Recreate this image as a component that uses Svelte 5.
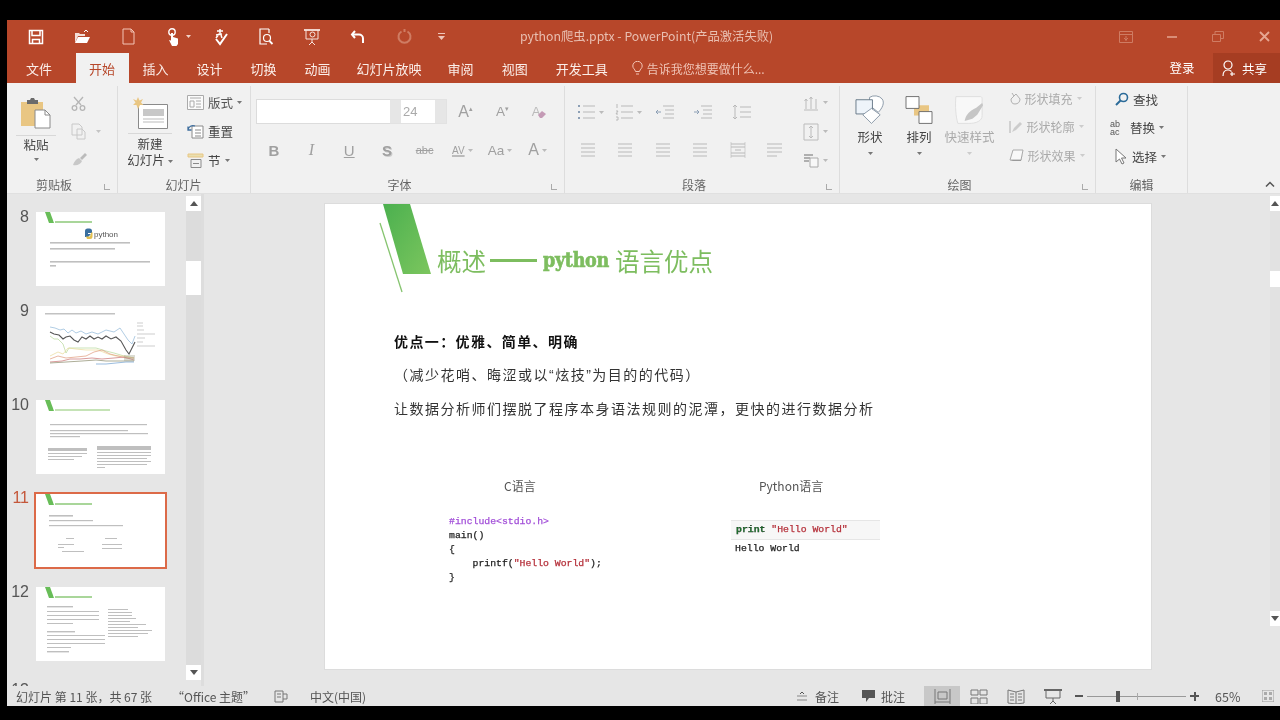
<script>
  const tabs = ['开始','插入','设计','切换','动画','幻灯片放映','审阅','视图','开发工具'];
  const lines8 = [[14,30,80,1.6],[14,36,65,1.6],[14,49,100,1.6],[14,53,6,1.6]];
  const lines10 = [[14,24,97,1.2],[14,30,78,1.2],[14,33,98,1.2],[14,36,30,1.2],[12,48,39,3],[12,53,39,1],[12,56,34,1],[12,59,26,1],[61,46,54,4],[61,52,54,1],[61,55,54,1],[61,58,50,1],[61,61,54,1],[61,64,50,1],[61,67,8,1]];
  const lines11 = [[13,21,24,1.6],[13,26,44,1.2],[13,31,74,1.2],[30,44,8,1],[69,44,12,1],[22,50,16,1],[22,53,6,1],[26,57,22,1],[66,50,20,1],[66,54,20,1]];
  const lines12 = [[11,19,26,1.4],[11,24,52,1],[11,28,52,1],[11,32,52,1],[11,36,26,1],[11,44,28,1.4],[11,48,58,1],[11,52,58,1],[11,56,58,1],[11,60,24,1],[11,64,22,1.4],[72,22,20,1],[72,25,24,1],[72,28,24,1],[72,31,28,1],[72,34,22,1],[72,37,38,1],[72,40,30,1],[72,43,44,1],[72,46,40,1],[72,49,30,1]];
</script>

{#snippet caret(color = '#777')}
  <svg class="caret" width="5" height="3" viewBox="0 0 5 3"><path d="M0 0h5L2.500 3z" fill={color}/></svg>
{/snippet}

{#snippet banner(w = 37, color = '#a9d69a')}
  <path d="M9 0h5l4 11h-5z" fill="#68bd58"/>
  <rect x="19" y="9" width={w} height="2" fill={color}/>
{/snippet}

{#snippet bars(list)}
  <g class="soft">
    {#each list as l}
      <rect x={l[0]} y={l[1]} width={l[2]} height={l[3]} fill="#666" opacity=".42"/>
    {/each}
  </g>
{/snippet}

{#snippet lines(kind)}
  <svg width="22" height="20" viewBox="0 0 22 20" fill="none" stroke="#b9b9b9" stroke-width="1">
    {#if kind === 'bul'}
      <path d="M7 4h12M7 10h12M7 16h12"/><path d="M2 4h2M2 10h2M2 16h2" stroke="#8c9fb5" stroke-width="2"/>
    {:else if kind === 'num'}
      <path d="M7 4h12M7 10h12M7 16h12M3 2v4M2 9h2l-2 3h2M2 15h2v3H2" />
    {:else if kind === 'dec'}
      <path d="M9 4h11M11 8h9M11 12h9M9 16h11"/><path d="M7 10H2m2-2-2 2 2 2" stroke="#8c9fb5"/>
    {:else if kind === 'inc'}
      <path d="M9 4h11M11 8h9M11 12h9M9 16h11"/><path d="M2 10h5m-2-2 2 2-2 2" stroke="#8c9fb5"/>
    {:else if kind === 'sp'}
      <path d="M9 5h11M9 10h11M9 15h11M4 3v14M2 5l2-2 2 2M2 15l2 2 2-2"/>
    {:else if kind === 'al'}
      <path d="M4 4h14M4 8h14M4 12h14M4 16h14"/>
    {:else if kind === 'di'}
      <path d="M4 4h14M4 7h14M4 13h14M4 16h14M8 10h6"/><path d="M4 2v16M18 2v16" stroke-width=".6"/>
    {:else}
      <path d="M3 4h15M3 8h15M3 12h15M3 16h10"/>
    {/if}
  </svg>
{/snippet}

<div class="stage">
  <div class="window">
    <header class="titlebar">
      <div class="qat">
        <span class="q"><svg width="16" height="16" viewBox="0 0 16 16" fill="none" stroke="#fff" stroke-width="1.500"><path d="M1.500 1.500h13v13h-13z"/><path d="M4 1.500v5h8v-5M4.500 14.500v-4h7v4"/></svg></span>
        <span class="q"><svg width="17" height="15" viewBox="0 0 17 15"><path d="M1 14V4h4l1 1h5v2H4z" fill="#f3ded7"/><path d="M1 14l3-6h12l-3 6z" fill="#fff"/><path d="M10 3l2-2 2 2" stroke="#fff" fill="none"/></svg></span>
        <span class="q"><svg width="13" height="17" viewBox="0 0 13 17" fill="none" stroke="#f3c5b6"><path d="M1 1h8l3 3v12H1zM9 1v3h3"/></svg></span>
        <span class="q touch"><svg width="13" height="18" viewBox="0 0 13 18"><circle cx="5" cy="4" r="3.200" fill="none" stroke="#fff" stroke-width="1.400"/><path d="M4 5h2v4l5 1.500V16l-1.500 2H5L2 12l2 .5z" fill="#fff"/></svg>{@render caret('#f1d4ca')}</span>
        <span class="q"><svg width="17" height="18" viewBox="0 0 17 18" fill="none" stroke="#fff" stroke-width="1.500"><path d="M5 3h6M8 1v5M4 7l6-1M7 6l-3 4M9 7l1 3"/><path d="M4 11l4 5 7-10" stroke-width="2"/></svg></span>
        <span class="q"><svg width="16" height="18" viewBox="0 0 16 18" fill="none" stroke="#fff" stroke-width="1.200"><path d="M11 1H2v15h7M11 1v4"/><circle cx="9" cy="10" r="3.500"/><path d="M11.500 13l3 3" stroke-width="1.800"/></svg></span>
        <span class="q"><svg width="18" height="18" viewBox="0 0 18 18" fill="none" stroke="#f8e4dd"><path d="M1 2h16" stroke-width="1.800"/><path d="M3 2v9h12V2M9 11v3M6 17l3-3 3 3"/><circle cx="9.500" cy="6.500" r="2.500"/></svg></span>
        <span class="q"><svg width="16" height="16" viewBox="0 0 16 16" fill="none" stroke="#fff" stroke-width="2"><path d="M5 2L2 5.500 5 9"/><path d="M2.500 5.500H9a4 4 0 0 1 4 4V14" /></svg></span>
        <span class="q"><svg width="15" height="15" viewBox="0 0 15 15" fill="none" stroke="#cf7c63" stroke-width="2"><path d="M10.500 2.500a6 6 0 1 1-6 0M7.500 0v3"/></svg></span>
        <span class="q more"><svg width="7" height="7" viewBox="0 0 7 7" fill="#efc6b9"><path d="M0 0h7v1H0zM0 3h7L3.500 7z"/></svg></span>
      </div>
      <div class="doc-title">python爬虫.pptx - PowerPoint(产品激活失败)</div>
      <div class="winbtns">
        <span><svg width="14" height="12" viewBox="0 0 14 12" fill="none" stroke="#cf7c63"><path d="M.5.500h13v11H.500zM.5 3.500h13M7 5v5M5 7l2 2 2-2"/></svg></span>
        <span><svg width="10" height="2" viewBox="0 0 10 2"><path d="M0 0h10v2H0z" fill="#d98d76"/></svg></span>
        <span><svg width="12" height="11" viewBox="0 0 12 11" fill="none" stroke="#cf7c63"><path d="M.5 3.500h8v7h-8zM3 3V.500h8.500v7H9"/></svg></span>
        <span><svg width="11" height="11" viewBox="0 0 11 11" stroke="#e6a692" stroke-width="1.800"><path d="M1 1l9 9M10 1l-9 9"/></svg></span>
      </div>
    </header>

    <nav class="tabbar">
      <span class="tab file">文件</span>
      {#each tabs as t, i}
        <span class="tab" class:active={i === 0} class:long={t.length === 5}>{t}</span>
      {/each}
      <span class="tell"><svg width="11" height="15" viewBox="0 0 11 15" fill="none" stroke="#f3c5b6"><path d="M3.500 10.500C3 8 .8 7.500.8 5a4.700 4.700 0 0 1 9.400 0c0 2.500-2.200 3-2.700 5.500zM4 13h3"/></svg>告诉我您想要做什么...</span>
      <span class="login">登录</span>
      <span class="share"><svg width="14" height="17" viewBox="0 0 14 17" fill="none" stroke="#fff" stroke-width="1.200"><circle cx="6" cy="5" r="4"/><path d="M1 16c0-4 2-6 5-6 1.500 0 2.500.5 3.500 1.500M10 12v4M8 14h5"/></svg>共享</span>
    </nav>

    <section class="ribbon">
      <div class="group g-clip">
        <div class="g-body clip">
          <div class="paste">
            <svg width="30" height="32" viewBox="0 0 30 32"><path d="M0 5h22v24H0z" fill="#e9c683"/><path d="M6 3h3l1-2h3l1 2h3v4H6z" fill="#6b6b6b"/><path d="M14 13h10l5 5v13H14z" fill="#fff" stroke="#8a8a8a"/><path d="M24 13v5h5" fill="none" stroke="#8a8a8a"/></svg>
            <i class="hr"></i>
            <span class="txt">粘贴</span>
            {@render caret()}
          </div>
          <div class="clip-tools">
            <svg width="15" height="15" viewBox="0 0 15 15" fill="none" stroke="#b5b5b5" stroke-width="1.300"><path d="M3 1l7 8M12 1L5 9"/><circle cx="3.500" cy="12" r="2.300"/><circle cx="11.500" cy="12" r="2.300"/></svg>
            <span class="with-caret"><svg width="15" height="17" viewBox="0 0 15 17" fill="none" stroke="#c8c8c8"><path d="M1 1h7l3 3v8H1zM6 6h5l3 3v7H6z"/></svg>{@render caret('#c4c4c4')}</span>
            <svg width="17" height="15" viewBox="0 0 17 15"><path d="M9 6l5-5 2 2-5 5z" fill="#bbb"/><path d="M2 13c1-3 3-6 6-7l3 3c-1 3-5 5-9 4z" fill="#c8c8c8"/></svg>
          </div>
        </div>
        <div class="g-label lab-clip">剪贴板<em class="launch"></em></div>
      </div>

      <div class="group g-slide">
        <div class="g-body slidebody">
          <div class="newslide">
            <svg width="36" height="34" viewBox="0 0 36 34"><path d="M6.500 8.500h29v24h-29z" fill="#fff" stroke="#8a8a8a"/><path d="M11 13h21v7H11z" fill="#c8c8c8"/><path d="M11 23h21M11 26h21" stroke="#bbb"/><path d="M6 1l1.500 3.500L11 3 9 6.500 11.500 9 8 9 6 13 4.500 9 1 9l2.500-2.500L1 3l3.500 1.500z" fill="#e9c683"/></svg>
            <i class="hr wide"></i>
            <span class="txt">新建</span>
            <span class="txt">幻灯片 {@render caret()}</span>
          </div>
          <div class="slide-tools">
            <span class="st dim"><svg width="17" height="15" viewBox="0 0 17 15" fill="none" stroke="#aaa"><path d="M.5.500h16v14H.500z" fill="#fbfbfb"/><path d="M3 3h11M3 6h4v6H3zM9 6h5M9 9h5M9 12h5"/></svg><b>版式</b>{@render caret()}</span>
            <span class="st"><svg width="17" height="15" viewBox="0 0 17 15" fill="none" stroke="#8a8a8a"><path d="M5 2h11v12H5z" fill="#fff"/><path d="M8 6h6M8 9h6M8 12h6"/><path d="M1 6a5 5 0 0 1 7-4M1 2.500V6h3.500" stroke="#3f6f9f" stroke-width="1.300"/></svg><b>重置</b></span>
            <span class="st"><svg width="17" height="15" viewBox="0 0 17 15" fill="none" stroke="#8a8a8a"><path d="M1 1h15v3H1z" fill="#e9dfb0" stroke="#e9c683"/><path d="M4 6.500h10v8H4zM6 10.500h6"/></svg><b>节</b>{@render caret()}</span>
          </div>
        </div>
        <div class="g-label lab-slide">幻灯片</div>
      </div>

      <div class="group g-font">
        <div class="g-body fontbody">
          <div class="fontrow">
            <div class="fontname"></div>
            <div class="fontsize"><i></i><span>24</span><i></i></div>
            <span class="big">A<sup>▴</sup></span>
            <span class="big small">A<sup>▾</sup></span>
            <span class="clear">A<svg width="10" height="9" viewBox="0 0 10 9"><path d="M1 5l4-4 4 3-4 4H3z" fill="#c49ab5"/></svg></span>
          </div>
          <div class="fmtrow">
            <b>B</b><i class="it">I</i><u>U</u><b class="sh">S</b><s>abc</s>
            <span class="sp"><u>AV</u>{@render caret('#bbb')}</span>
            <span class="sp">Aa{@render caret('#bbb')}</span>
            <span class="sp fa">A{@render caret('#bbb')}</span>
          </div>
        </div>
        <div class="g-label lab-font">字体<em class="launch"></em></div>
      </div>

      <div class="group g-para">
        <div class="g-body parabody">
          <div class="para-grid">
            <span class="cc">{@render lines('bul')}{@render caret('#bbb')}</span><span class="cc">{@render lines('num')}{@render caret('#bbb')}</span><span class="n4">{@render lines('dec')}</span><span class="n5">{@render lines('inc')}</span><span class="n8">{@render lines('sp')}</span><span></span>
            <span>{@render lines('al')}</span><span>{@render lines('al')}</span><span>{@render lines('al')}</span><span>{@render lines('al')}</span><span>{@render lines('di')}</span><span>{@render lines('oth')}</span>
          </div>
          <div class="para-side">
            <span><svg width="16" height="16" viewBox="0 0 16 16" fill="none" stroke="#bbb"><path d="M3 14V4M8 14V2M13 14V4M1 15h14M3 4L1.500 6M3 4l1.500 2M8 2L6.500 4M8 2l1.500 2"/></svg>{@render caret('#bbb')}</span>
            <span><svg width="16" height="18" viewBox="0 0 16 18" fill="none" stroke="#bbb"><path d="M1 1h14v16H1zM8 3v12M6 5l2-2 2 2M6 13l2 2 2-2"/></svg>{@render caret('#bbb')}</span>
            <span><svg width="16" height="15" viewBox="0 0 16 15" fill="none" stroke="#aaa"><path d="M1 2h9M1 5h6M1 8h5" stroke="#999" stroke-width="1.400"/><path d="M7 5h8v9H7z" fill="#f8f8f8"/></svg>{@render caret('#bbb')}</span>
          </div>
        </div>
        <div class="g-label lab-para">段落<em class="launch"></em></div>
      </div>

      <div class="group g-draw">
        <div class="g-body drawbody">
          <div class="bigbtn">
            <svg width="31" height="30" viewBox="0 0 32 38" preserveAspectRatio="none"><path d="M15 3a9 9 0 0 1 13 2c3 5 0 12-4 17l-9-9z" fill="#fff" stroke="#7f8f9f"/><path d="M1 6h17v18H1z" fill="#eef4fa" stroke="#5d6f7f"/><path d="M17 17l9 8-9 11-9-11z" fill="#fff" stroke="#7f8f9f"/></svg>
            <span class="txt">形状</span>{@render caret()}
          </div>
          <div class="bigbtn">
            <svg width="28" height="30" viewBox="0 0 28 38" preserveAspectRatio="none"><path d="M9 13h15v13H9z" fill="#e9c683"/><path d="M1 2h13v15H1z" fill="#fff" stroke="#666"/><path d="M14 21h13v15H14z" fill="#fff" stroke="#666"/></svg>
            <span class="txt">排列</span>{@render caret()}
          </div>
          <div class="bigbtn off">
            <svg width="33" height="30" viewBox="0 0 34 38" preserveAspectRatio="none"><path d="M3 2h25c2 0 2 2 2 4v20c0 7-6 10-14 10H5c-2-8-3-22-2-34z" fill="#f8f8f8" stroke="#ddd"/><path d="M24 16l6-6 1 3-6 12-5 5-8 3c1-8 5-13 12-17z" fill="#c6c6c6"/></svg>
            <span class="txt">快速样式</span>{@render caret('#ccc')}
          </div>
          <div class="shape-tools">
            <span><svg width="12" height="13" viewBox="0 0 12 13" fill="none" stroke="#b0b0b0"><path d="M2 7l5-5 4 5c0 3-2 5-5 5S2 10 2 7zM5 4L3 1"/></svg><b>形状填充</b>{@render caret('#ccc')}</span>
            <span><svg width="14" height="14" viewBox="0 0 14 14" fill="none" stroke="#b0b0b0"><path d="M1 1v12"/><path d="M3 12l2-4 6-6 2 2-6 6z" fill="#ccc" stroke="none"/></svg><b>形状轮廓</b>{@render caret('#ccc')}</span>
            <span><svg width="15" height="13" viewBox="0 0 15 13"><path d="M4 1h10l-2 10H1z" fill="#f8f8f8" stroke="#aaa"/><path d="M1 11l3 1h8l2-8-2 7z" fill="#999"/></svg><b>形状效果</b>{@render caret('#ccc')}</span>
          </div>
        </div>
        <div class="g-label lab-draw">绘图<em class="launch"></em></div>
      </div>

      <div class="group g-edit">
        <div class="g-body editbody">
          <span class="e e1"><svg width="14" height="14" viewBox="0 0 14 14" fill="none" stroke="#2b6b99" stroke-width="1.600"><circle cx="8.500" cy="5.500" r="4"/><path d="M5.500 8.500L1 13" stroke-width="2"/></svg>查找</span>
          <span class="e e2"><span class="abac">ab<br/>ac</span>替换 {@render caret()}</span>
          <span class="e e3"><svg width="13" height="17" viewBox="0 0 13 17" fill="#fff" stroke="#777"><path d="M1 1v13l3.500-3 2.500 5 2-1-2.500-5H11z"/></svg>选择 {@render caret()}</span>
        </div>
        <div class="g-label">编辑</div>
      </div>
      <svg class="collapse" width="10" height="6" viewBox="0 0 10 6" fill="none" stroke="#555" stroke-width="1.500"><path d="M1 5.500l4-4 4 4"/></svg>
    </section>

    <main class="workspace">
      <aside class="panel">
        <div class="thumbs">
          <div class="row"><span class="num">8</span><svg class="thumb" viewBox="0 0 129 74">
            {@render banner()}
            <path d="M49 19a2.500 2.500 0 0 1 2.500-2.500h2a2.500 2.500 0 0 1 2.500 2.500v2h-4v1h3l-3 3h-3z" fill="#3a6f9f"/><path d="M56.500 20v4.500a2.500 2.500 0 0 1-2.500 2.500h-3l-1-2.500h4l1-3.500z" fill="#e4c04f"/>
            <text x="58" y="24.500" class="tt">python</text>
            {@render bars(lines8)}
          </svg></div>
          <div class="row"><span class="num">9</span><svg class="thumb" viewBox="0 0 129 74">
            <rect x="9" y="7" width="70" height="1.500" fill="#999" opacity=".6"/>
            <g fill="none" stroke-width=".7">
              <polyline points="14,21 19,22 24,24 28,23 32,27 36,24 40,27 45,25 50,28 56,26 62,28 70,24 78,26 84,22 88,28 92,34 96,38 99,30" stroke="#8fb8d8"/>
              <polyline points="14,26 18,28 23,29 27,33 30,31 34,30 38,34 42,36 46,31 50,33 54,30 58,33 62,31 66,33 70,30 75,33 80,31 85,35 90,44 93,48 96,42 99,36" stroke="#555" stroke-width="1.100"/>
              <polyline points="14,30 18,33 22,33 27,38 30,47 33,42 40,42 50,42 60,42 70,45 78,47 88,50 98,52" stroke="#b6d99a"/>
              <polyline points="14,50 22,46 27,48 32,42 40,43 50,44 62,44 72,48 80,50 88,50 98,52" stroke="#eadb9a"/>
              <polyline points="14,53 22,50 30,52 40,51 50,50 58,46 66,44 74,48 82,50 90,52 98,52" stroke="#e09a7a"/>
              <polyline points="14,56 26,55 34,53 44,53 56,52 66,53 78,52 88,51 98,54" stroke="#c87070"/>
              <polyline points="14,57 30,56 46,55 60,54 70,55 84,55 98,55" stroke="#8a8a6a"/>
              <polyline points="60,58 70,58 80,57 90,56 98,56" stroke="#6f9fd0"/>
            </g>
            <rect x="88" y="49" width="11" height="6" fill="#9a9a80" opacity=".35"/>
            <path d="M101 17h6M101 20h6M101 24h7M101 28h18M101 32h8M101 36h6M101 40h18" stroke="#999" stroke-width=".6" opacity=".8"/>
          </svg></div>
          <div class="row"><span class="num">10</span><svg class="thumb" viewBox="0 0 129 74">
            {@render banner(55,'#c5e3b6')}
            {@render bars(lines10)}
          </svg></div>
          <div class="row current"><span class="num">11</span><svg class="thumb" viewBox="0 0 129 73">
            {@render banner()}
            {@render bars(lines11)}
          </svg></div>
          <div class="row"><span class="num">12</span><svg class="thumb" viewBox="0 0 129 74">
            {@render banner()}
            {@render bars(lines12)}
          </svg></div>
          <div class="row last"><span class="num">13</span></div>
        </div>
        <div class="vbar narrow">
          <span class="arrow"><svg width="8" height="5" viewBox="0 0 8 5"><path d="M0 5l4-5 4 5z" fill="#555"/></svg></span>
          <div class="track"><i class="knob"></i></div>
          <span class="arrow"><svg width="8" height="5" viewBox="0 0 8 5"><path d="M0 0l4 5 4-5z" fill="#555"/></svg></span>
        </div>
      </aside>

      <div class="canvas">
        <article class="slide">
          <svg class="deco" width="60" height="92" viewBox="0 0 60 92">
            <defs><linearGradient id="gr" x1="0" y1="0" x2="1" y2="1"><stop offset="0" stop-color="#4bb04f"/><stop offset="1" stop-color="#7cc65e"/></linearGradient></defs>
            <path d="M6 0h27l21 70H26z" fill="url(#gr)"/>
            <path d="M3 19l22 69" stroke="#86c470" stroke-width="1.300"/>
          </svg>
          <h1><span class="cn">概述</span><span class="dash"></span><span class="py">python</span><span class="cn last">语言优点</span></h1>
          <div class="body">
            <p class="strong">优点一：优雅、简单、明确</p>
            <p class="sub">（减少花哨、晦涩或以<span class="q2">“</span>炫技<span class="q2">”</span>为目的的代码）</p>
            <p>让数据分析师们摆脱了程序本身语法规则的泥潭，更快的进行数据分析</p>
          </div>
          <div class="compare">
            <div class="col c">
              <div class="cap">C语言</div>
              <pre class="code"><span class="pp">#include&lt;stdio.h&gt;</span>
main()
&#123;
    printf(<span class="str">"Hello World"</span>);
&#125;</pre>
            </div>
            <div class="col p">
              <div class="cap">Python语言</div>
              <div class="cell"><b class="kw">print</b> <span class="str">"Hello World"</span></div>
              <pre class="code out">Hello World</pre>
            </div>
          </div>
        </article>
        <div class="vbar main">
          <span class="arrow"><svg width="8" height="5" viewBox="0 0 8 5"><path d="M0 5l4-5 4 5z" fill="#555"/></svg></span>
          <div class="track"><i class="knob"></i></div>
          <span class="arrow"><svg width="8" height="5" viewBox="0 0 8 5"><path d="M0 0l4 5 4-5z" fill="#555"/></svg></span>
        </div>
      </div>
    </main>

    <footer class="status">
      <span class="s1">幻灯片 第 11 张，共 67 张</span>
      <span class="s2">“Office 主题”</span>
      <svg class="s3" width="14" height="13" viewBox="0 0 14 13" fill="none" stroke="#777"><path d="M1 1h8v11H1zM9 4h4v5H9M3 4h4M3 7h4"/></svg>
      <span class="s4">中文(中国)</span>
      <span class="s5"><svg width="12" height="10" viewBox="0 0 12 10" fill="none" stroke="#888"><path d="M1 5h10M1 9h10"/><path d="M4 3l2-2 2 2" stroke="#555"/></svg>备注</span>
      <span class="s6"><svg width="13" height="12" viewBox="0 0 13 12"><path d="M0 0h13v8H7l-3 4V8H0z" fill="#555"/></svg>批注</span>
      <span class="view on"><svg width="17" height="15" viewBox="0 0 17 15" fill="none" stroke="#777"><path d="M1 0v15M16 0v15M4 3h9v7H4zM1 13h15"/></svg></span>
      <span class="view"><svg width="18" height="15" viewBox="0 0 18 15" fill="none" stroke="#777"><path d="M1 1h7v5H1zM10 1h7v5h-7zM1 9h7v6H1zM10 9h7v6h-7z"/></svg></span>
      <span class="view"><svg width="18" height="15" viewBox="0 0 18 15" fill="none" stroke="#777"><path d="M1 1l8 2 8-2v13l-8 1-8-1zM9 3v12M3 5h4M3 8h4M3 11h4M11 5h4M11 8h4M11 11h4"/></svg></span>
      <span class="view"><svg width="18" height="15" viewBox="0 0 18 15" fill="none" stroke="#666"><path d="M0 1h18" stroke-width="2"/><path d="M2 1v8h14V1M9 9v3M6 15l3-3 3 3"/></svg></span>
      <span class="zoombar">
        <i class="minus"></i>
        <span class="slider"><i class="tick"></i><i class="thumbk"></i></span>
        <i class="plus"></i>
      </span>
      <span class="pct">65%</span>
      <svg class="fit" width="12" height="12" viewBox="0 0 12 12"><path d="M0 0h12v12H0z" fill="none" stroke="#999"/><path d="M2 2h3v3H2zM7 2h3v3H7zM2 7h3v3H2zM7 7h3v3H7z" fill="#aaa"/></svg>
    </footer>
  </div>
</div>

<style>
  :global(body) { margin: 0; background: #000; }
  .stage { width: 1280px; height: 720px; box-sizing: border-box; padding: 20px 0 14px 7px; background: #000; overflow: hidden; filter: blur(.45px); font-family: "Noto Sans CJK SC", "Liberation Sans", sans-serif; color: #444; }
  .window { width: 1273px; height: 686px; overflow: hidden; display: flex; flex-direction: column; background: #e6e6e6; }
  svg { display: block; flex: none; }
  .caret { display: inline-block; vertical-align: middle; }

  .titlebar { height: 33px; flex: none; background: #b7472a; display: flex; align-items: center; }
  .qat { display: flex; margin-left: 6px; }
  .q { width: 46px; height: 33px; display: flex; align-items: center; justify-content: center; }
  .touch { gap: 6px; padding-left: 9px; box-sizing: border-box; }
  .q.more { width: 28px; }
  .doc-title { margin-left: 65px; font-size: 12.300px; line-height: 33px; color: #e9bfb1; }
  .winbtns { display: flex; margin-left: auto; margin-right: -7px; }
  .winbtns span { width: 46px; height: 33px; display: flex; align-items: center; justify-content: center; }

  .tabbar { height: 30px; flex: none; background: #b7472a; display: flex; align-items: flex-end; color: #fff; font-size: 12.500px; }
  .tab { box-sizing: border-box; height: 28px; padding: 0 14px; line-height: 27px; white-space: nowrap; color: #fbeee9; font-size: 13px; }
  .tab.file { margin: 0 9.500px 0 5px; }
  .tab.long { padding: 0 12px; }
  .tab.active { background: #f1f1f1; color: #b7472a; height: 30px; line-height: 31px; padding: 0 13.500px; }
  .tell { display: flex; align-items: center; gap: 4px; height: 28px; margin-left: 10px; color: #efc3b5; font-size: 12px; margin-bottom: 1px; }
  .login { margin-left: auto; margin-right: 8px; line-height: 28px; width: 46px; text-align: center; height: 28px; margin-bottom: 1px; font-size: 12.500px; }
  .share { width: 67px; height: 30px; box-sizing: border-box; background: #a63d22; display: flex; align-items: center; gap: 6px; padding-left: 9px; font-size: 12.500px; }

  .ribbon { height: 111px; flex: none; background: #f1f1f1; display: flex; position: relative; border-bottom: 1px solid #e0e0e0; box-sizing: border-box; }
  .group { display: flex; flex-direction: column; height: 107px; margin-top: 3px; border-right: 1px solid #dddddd; box-sizing: border-box; position: relative; }
  .g-body { height: 90px; display: flex; }
  .g-label { height: 17px; line-height: 17px; text-align: center; font-size: 12px; color: #666; position: relative; }
  .launch { position: absolute; right: 7px; bottom: 3px; width: 5px; height: 5px; border-left: 1px solid #aaa; border-bottom: 1px solid #aaa; }
  .txt { font-size: 12.500px; line-height: 16px; color: #444; white-space: nowrap; }
  .hr { display: block; width: 40px; height: 1px; background: #d8d8d8; margin: 6px 0 1px; }
  .hr.wide { width: 44px; }

  .g-clip { width: 111px; }
  .lab-clip { padding-right: 16px; }
  .paste { width: 40px; margin-left: 9px; display: flex; flex-direction: column; align-items: center; padding-top: 11px; box-sizing: border-box; height: 90px; }
  .paste .caret { margin-top: 5px; }
  .clip-tools { margin-left: 15px; display: flex; flex-direction: column; padding-top: 10px; gap: 12px; align-items: flex-start; height: 90px; box-sizing: border-box; }
  .with-caret { display: flex; align-items: center; gap: 10px; }

  .g-slide { width: 133px; }
  .newslide { width: 60px; margin-left: 2px; display: flex; flex-direction: column; align-items: center; padding-top: 10px; }
  .newslide .hr { margin: 3px 0 2px; }
  .slide-tools { display: flex; flex-direction: column; margin-left: 7px; padding-top: 6px; gap: 9px; }
  .st { display: flex; align-items: center; height: 20px; gap: 4px; font-size: 12.500px; white-space: nowrap; }
  .st b { font-weight: 400; color: #444; }
  .st.dim b { color: #555; }
  .lab-slide { padding-right: 1px; }

  .g-font { width: 314px; }
  .fontbody { flex-direction: column; padding-left: 5px; }
  .fontrow { display: flex; align-items: center; padding-top: 13px; height: 25px; }
  .fontname { width: 134px; height: 25px; box-sizing: border-box; background: #fff; border: 1px solid #dcdcdc; border-right: 0; }
  .fontsize { width: 57px; height: 25px; box-sizing: border-box; display: flex; background: #fff; border: 1px solid #e2e2e2; border-left: 0; font-size: 13px; color: #aaa; line-height: 24px; }
  .fontsize i { width: 11px; background: #e6e6e6; }
  .fontsize span { flex: 1; padding-left: 2px; font-family: "Liberation Sans", sans-serif; }
  .big { width: 37px; text-align: center; font-size: 16px; color: #a0a0a0; font-family: "Liberation Sans", sans-serif; }
  .big.small { font-size: 13.500px; }
  .big sup { font-size: 7px; line-height: 0; }
  .clear { width: 37px; position: relative; display: flex; justify-content: center; align-items: flex-end; color: #bbb; font-size: 13px; font-family: "Liberation Sans", sans-serif; }
  .clear svg { margin-left: -3px; }
  .fmtrow { display: grid; grid-template-columns: repeat(8, 37.700px); margin: 14px 0 0 -1px; height: 24px; place-items: center; font-family: "Liberation Sans", sans-serif; font-size: 15px; color: #a0a0a0; }
  .fmtrow b { font-weight: 700; }
  .fmtrow .it { font-family: "Liberation Serif", serif; font-size: 16px; }
  .fmtrow s { font-size: 11px; }
  .sp { display: inline-flex; align-items: center; gap: 3px; font-size: 13.500px; }
  .sp.fa { font-size: 16px; }
  .sp u { font-size: 10px; text-decoration-thickness: 2px; text-decoration-color: #bbb; }
  .sh { text-shadow: 1px 1px 0 #ccc; }
  .lab-font { padding-right: 16px; }

  .g-para { width: 275px; }
  .parabody { padding-left: 4px; }
  .para-grid { display: grid; grid-template-columns: repeat(6, 37.500px); grid-auto-rows: 38px; padding-top: 7px; place-items: center; }
  .cc { display: flex; align-items: center; gap: 1px; margin-left: 5px; }
  .n4 { margin-left: 4px; }
  .n5 { margin-left: 5px; }
  .n8 { margin-left: 8px; }
  .para-side { display: flex; flex-direction: column; gap: 10px; padding-top: 7px; margin-left: 5px; }
  .para-side span { display: flex; height: 19px; align-items: center; gap: 4px; padding-left: 4px; }
  .lab-para { padding-right: 16px; }

  .g-draw { width: 256px; }
  .drawbody { padding-left: 5.500px; }
  .bigbtn { width: 49px; display: flex; flex-direction: column; align-items: center; padding-top: 9px; box-sizing: border-box; }
  .bigbtn .txt { margin-top: 4px; }
  .bigbtn .caret { margin-top: 7px; }
  .bigbtn.off { width: 52px; }
  .bigbtn.off .txt { color: #aaa; }
  .shape-tools { display: flex; flex-direction: column; margin-left: 13px; padding-top: 2px; gap: 8.500px; }
  .shape-tools span { display: flex; align-items: center; height: 20px; gap: 4px; white-space: nowrap; }
  .shape-tools b { font-weight: 400; font-size: 12px; color: #aaa; }
  .lab-draw { padding-right: 16px; }

  .g-edit { width: 92px; }
  .editbody { flex-direction: column; padding-top: 3px; gap: 8.500px; }
  .e { display: flex; align-items: center; height: 20px; font-size: 12.500px; gap: 4px; white-space: nowrap; color: #444; }
  .e1 { padding-left: 19px; }
  .e2 { padding-left: 14px; }
  .e3 { padding-left: 19px; }
  .abac { font-size: 9px; line-height: 8px; font-family: "Liberation Sans", sans-serif; color: #555; width: 16px; }
  .collapse { position: absolute; right: 5px; bottom: 6px; }

  .workspace { flex: 1; min-height: 0; display: flex; background: #e6e6e6; }
  .panel { width: 194px; display: flex; border-right: 3px solid #dddddd; box-sizing: content-box; flex: none; overflow: hidden; }
  .thumbs { width: 179px; flex: none; padding-top: 18px; box-sizing: border-box; overflow: hidden; }
  .row { display: flex; gap: 7px; height: 74px; margin-bottom: 20px; }
  .row:nth-child(3) { margin-bottom: 19px; }
  .row.last { height: 10px; margin: 0; }
  .num { width: 22px; text-align: right; font-size: 16px; line-height: 16px; margin-top: -3px; color: #555; font-family: "Liberation Sans", sans-serif; }
  .row.last .num { margin-top: 1px; }
  .thumb { width: 129px; height: 74px; background: #fff; flex: none; }
  .soft { filter: blur(.3px); }
  .tt { font-size: 8px; fill: #555; font-family: "Liberation Sans", sans-serif; }
  .current .num { color: #c4573a; margin-top: -3px; }
  .current .thumb { height: 73px; margin-top: 1px; outline: 2px solid #dc6a48; }

  .vbar { width: 15px; display: flex; flex-direction: column; flex: none; background: #dcdcdc; }
  .vbar.narrow { margin-top: 2px; height: 484px; }
  .arrow { height: 15px; background: #fff; display: flex; align-items: center; justify-content: center; flex: none; }
  .track { flex: 1; }
  .knob { display: block; width: 100%; background: #fff; }
  .narrow .knob { height: 34px; margin-top: 50px; }

  .canvas { flex: 1; min-width: 0; display: flex; padding: 10px 0 17px 121px; position: relative; }
  .slide { width: 826px; height: 465px; flex: none; background: #fff; position: relative; box-shadow: 0 0 0 1px #dcdcdc; overflow: hidden; box-sizing: border-box; padding-left: 112px; }
  .deco { position: absolute; left: 52px; top: 0; }
  h1 { margin: 0; padding-top: 40px; height: 73px; box-sizing: border-box; display: flex; align-items: center; font-weight: 400; color: #7dbd5f; font-size: 24.500px; line-height: 32px; white-space: nowrap; }
  h1 .dash { width: 47px; height: 2.500px; background: #7dbd5f; margin: 0 6px 0 4px; flex: none; }
  h1 .py { font-family: "DejaVu Serif", serif; font-weight: 700; font-stretch: condensed; font-size: 19.500px; -webkit-text-stroke: .6px #7dbd5f; width: 72px; letter-spacing: -.3px; }
  .body { margin-left: -43px; margin-top: 48px; }
  .body p { margin: 0; font-size: 14px; line-height: 33px; letter-spacing: 1.500px; color: #333; white-space: nowrap; }
  .body .strong { font-weight: 700; letter-spacing: 1.400px; color: #111; }
  .q2 { font-family: "Liberation Sans", sans-serif; }
  .compare { display: grid; grid-template-columns: 282px 200px; margin: 52px 0 0 12px; }
  .col.c .cap { padding-left: 55px; }
  .col.p .cap { padding-left: 28px; }
  .cap { font-size: 12px; line-height: 18px; color: #555; height: 38px; white-space: nowrap; }
  .code { margin: 0; font-family: "Liberation Mono", monospace; font-size: 9.800px; line-height: 14px; color: #222; white-space: pre; -webkit-text-stroke: .25px #222; }
  .pp { color: #a24fd8; -webkit-text-stroke-color: #a24fd8; }
  .str { color: #b5303a; -webkit-text-stroke-color: #b5303a; }
  .kw { color: #1d7a2e; }
  .cell { width: 149px; height: 20px; box-sizing: border-box; margin-top: 5px; padding-left: 5px; background: #f7f7f7; border-top: 1px solid #e6e6e6; border-bottom: 1px solid #e6e6e6; font-family: "Liberation Mono", monospace; font-size: 9.800px; line-height: 18px; white-space: pre; -webkit-text-stroke: .25px #222; }
  .code.out { padding: 2px 0 0 4px; }
  .vbar.main { position: absolute; right: 0; top: 2px; height: 430px; width: 10px; background: #e2e2e2; }
  .main .knob { height: 16px; margin-top: 60px; }

  .status { height: 20px; flex: none; background: #e6e6e6; display: flex; align-items: center; font-size: 12px; color: #555; white-space: nowrap; }
  .s1 { margin-left: 9px; width: 156px; }
  .s2 { width: 102px; }
  .s3 { margin-right: 22px; }
  .s4 { width: 486px; }
  .s5 { display: flex; align-items: center; gap: 7px; width: 66px; }
  .s6 { display: flex; align-items: center; gap: 6px; width: 62px; }
  .view { width: 37px; height: 20px; display: flex; align-items: center; justify-content: center; flex: none; }
  .view.on { width: 36px; background: #c8c8c8; }
  .zoombar { display: flex; align-items: center; margin-left: 4px; }
  .minus { width: 8px; height: 2px; background: #555; }
  .plus { width: 9px; height: 9px; background: linear-gradient(#555,#555) center/9px 2px no-repeat, linear-gradient(#555,#555) center/2px 9px no-repeat; }
  .slider { width: 99px; height: 1px; background: #999; margin: 0 4px; position: relative; }
  .tick { position: absolute; left: 50px; top: -3px; width: 1px; height: 7px; background: #aaa; }
  .thumbk { position: absolute; left: 29px; top: -5px; width: 4px; height: 11px; background: #555; }
  .pct { margin-left: 16px; width: 32px; font-size: 12.500px; }
  .fit { margin-left: 15px; }
</style>
